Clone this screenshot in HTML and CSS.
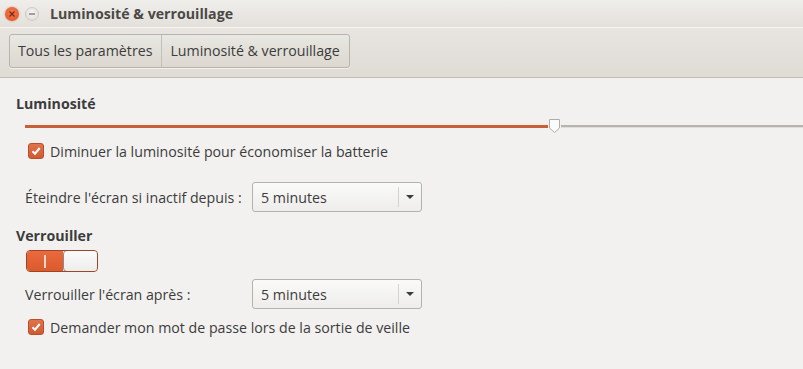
FILE: index.html
```html
<!DOCTYPE html>
<html lang="fr">
<head>
<meta charset="UTF-8">
<title>Luminosité &amp; verrouillage</title>
<link rel="stylesheet" href="styles.css">
</head>
<body>

<div class="titlebar">
    <span class="winbtn close">
        <svg width="8" height="8" viewBox="0 0 8 8"><path d="M1.5 1.5 L6.5 6.5 M6.5 1.5 L1.5 6.5" stroke="#7a2a10" stroke-width="1.3"/></svg>
    </span>
    <span class="winbtn minimize">
        <svg width="8" height="8" viewBox="0 0 8 8"><path d="M1 4 H7" stroke="#6a6a6a" stroke-width="1.2"/></svg>
    </span>
    <span class="title">Luminosité &amp; verrouillage</span>
</div>

<div class="toolbar">
    <div class="crumbs">
        <button class="crumb">Tous les paramètres</button>
        <button class="crumb">Luminosité &amp; verrouillage</button>
    </div>
</div>

<div class="content">
    <div class="section-title">Luminosité</div>
    <div class="slider">
        <div class="fill"></div>
        <div class="thumb">
            <svg width="13" height="16" viewBox="0 0 13 16"><path d="M1.5 1.5 H11.5 V10 L6.5 14.5 L1.5 10 Z" fill="#fbfbfb" stroke="#b2aca6" stroke-width="1"/></svg>
        </div>
        <div class="rest"></div>
    </div>
    <label class="check">
        <span class="box"><svg width="12" height="12" viewBox="0 0 12 12"><path d="M2.5 6.2 L5 8.7 L9.7 3" fill="none" stroke="#fff" stroke-width="2"/></svg></span>
        Diminuer la luminosité pour économiser la batterie
    </label>
    <div class="row first-row">
        <span class="row-label">Éteindre l'écran si inactif depuis :</span>
        <div class="combo"><span class="value">5 minutes</span><span class="arrow"><svg width="10" height="6" viewBox="0 0 10 6"><path d="M1 1 H9 L5 5 Z" fill="#3c3c3c"/></svg></span></div>
    </div>

    <div class="section-title lock-title">Verrouiller</div>
    <div class="switch">
        <div class="on"><span class="bar"></span></div>
        <div class="knob"></div>
    </div>
    <div class="row second-row">
        <span class="row-label">Verrouiller l'écran après :</span>
        <div class="combo"><span class="value">5 minutes</span><span class="arrow"><svg width="10" height="6" viewBox="0 0 10 6"><path d="M1 1 H9 L5 5 Z" fill="#3c3c3c"/></svg></span></div>
    </div>
    <label class="check last-check">
        <span class="box"><svg width="12" height="12" viewBox="0 0 12 12"><path d="M2.5 6.2 L5 8.7 L9.7 3" fill="none" stroke="#fff" stroke-width="2"/></svg></span>
        Demander mon mot de passe lors de la sortie de veille
    </label>
</div>

</body>
</html>
```

FILE: styles.css
```css
body {
    margin: 0;
    padding: 0;
    width: 803px;
    height: 369px;
    overflow: hidden;
    font-family: "Open Sans", "DejaVu Sans", sans-serif;
    font-size: 14.2px;
    color: #3c3c3c;
    background-color: #f2f1f0;
}

.titlebar {
    height: 27px;
    display: flex;
    align-items: center;
    padding-left: 5px;
    background: linear-gradient(#f0eeeb, #e3e0db);
    border-bottom: 1px solid #f6f5f3;
}

.winbtn {
    width: 14px;
    height: 14px;
    border-radius: 50%;
    display: flex;
    align-items: center;
    justify-content: center;
    margin-right: 6px;
}

.close {
    background: radial-gradient(circle at 50% 40%, #f47a4f, #dd5225);
    box-shadow: 0 0 2px rgba(200, 80, 30, 0.6);
}

.minimize {
    background: radial-gradient(circle at 50% 40%, #f6f5f3, #dcd9d4);
    border: 1px solid #cfcbc5;
    width: 12px;
    height: 12px;
}

.title {
    margin-left: 5px;
    font-weight: bold;
    font-size: 14.2px;
    color: #4a4945;
}

.toolbar {
    height: 49px;
    background: linear-gradient(#e8e5e0, #dfdbd5);
    border-bottom: 1px solid #bfbbb5;
    padding-left: 9px;
    display: flex;
    align-items: center;
}

.crumbs {
    display: flex;
    border: 1px solid #b9b4ab;
    border-radius: 3px;
    margin-top: -4px;
    background: linear-gradient(#e9e7e2, #dcd8d0);
    box-shadow: 0 1px 0 #f3f1ee;
}

.crumb {
    font-family: inherit;
    font-size: 14.2px;
    color: #3c3c3c;
    background: transparent;
    border: none;
    height: 32px;
    padding: 0 9px 0 8px;
}

.crumb + .crumb {
    border-left: 1px solid #c4c0b8;
}

.content {
    padding: 16px 0 0 16px;
}

.section-title {
    font-weight: bold;
    font-size: 14.2px;
    height: 20px;
}

.slider {
    display: flex;
    align-items: center;
    margin: 4px 0 0 9px;
    height: 16px;
}

.fill {
    width: 523px;
    height: 3px;
    background-color: #c6603a;
    box-shadow: 0 -2px 0 #f8ece6;
}

.thumb {
    width: 13px;
    height: 16px;
    display: flex;
}

.rest {
    flex: 1;
    height: 2px;
    background-color: #b7b4b0;
    border-bottom: 1px solid #e0dedb;
}

.check {
    display: flex;
    align-items: center;
    margin: 6px 0 0 12px;
    height: 22px;
}

.box {
    width: 16px;
    height: 16px;
    border-radius: 3px;
    background: linear-gradient(#e3734b, #cf5a31);
    border: 1px solid #b94f29;
    box-sizing: border-box;
    display: flex;
    align-items: center;
    justify-content: center;
    margin-right: 6px;
}

.row {
    display: flex;
    align-items: center;
    margin-left: 9px;
}

.row-label {
    width: 227px;
}

.first-row {
    margin-top: 20px;
}

.combo {
    width: 170px;
    height: 30px;
    box-sizing: border-box;
    border: 1px solid #b6b2ab;
    border-radius: 3px;
    background: linear-gradient(#fafaf9, #eeedeb);
    display: flex;
    align-items: center;
}

.combo .value {
    flex: 1;
    padding-left: 8px;
}

.combo .arrow {
    width: 22px;
    height: 20px;
    border-left: 1px solid #d6d3ce;
    display: flex;
    align-items: center;
    justify-content: center;
}

.lock-title {
    margin-top: 14px;
}

.switch {
    display: flex;
    width: 72px;
    height: 22px;
    margin: 4px 0 0 10px;
    border: 1px solid #9a4728;
    border-radius: 4px;
    box-sizing: border-box;
    overflow: hidden;
}

.switch .on {
    width: 36px;
    background: linear-gradient(#ea6a3d, #dc5a2c);
    display: flex;
    align-items: center;
    justify-content: center;
}

.switch .bar {
    width: 2px;
    height: 13px;
    background-color: #f7d7c6;
}

.switch .knob {
    flex: 1;
    background: linear-gradient(#fbfbfb, #eeedec);
    border: 1px solid #8e8a85;
    border-radius: 4px;
    margin: -1px -1px -1px 0;
}

.second-row {
    margin-top: 7px;
}

.last-check {
    margin-top: 7px;
}
```
